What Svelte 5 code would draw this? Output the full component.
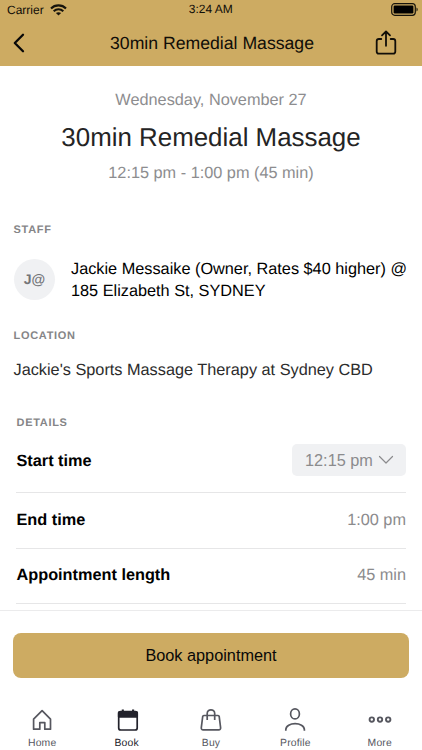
<script>
  const rows = [
    { label: 'Start time', value: '12:15 pm', select: true },
    { label: 'End time', value: '1:00 pm' },
    { label: 'Appointment length', value: '45 min' }
  ];
  const tabs = ['Home', 'Book', 'Buy', 'Profile', 'More'];
</script>

<div class="screen">
  <header>
    <div class="status">
      <div class="carrier">
        <span>Carrier</span>
        <svg width="17" height="12" viewBox="0 0 17 12" fill="none" stroke="#17140c" stroke-width="2.1">
          <path d="M1 4.4C5 .3 12 .3 16 4.4" />
          <path d="M3.7 7.2C6.4 4.6 10.6 4.6 13.3 7.2" />
          <path d="M8.5 11.6L5.9 9.1C7.3 7.8 9.7 7.8 11.1 9.1Z" fill="#17140c" stroke="none" />
        </svg>
      </div>
      <span class="clock">3:24 AM</span>
      <div class="battery">
        <svg width="28" height="13" viewBox="0 0 28 13">
          <rect x=".7" y=".7" width="23.6" height="11.6" rx="3" fill="none" stroke="#17140c" stroke-width="1.2" />
          <rect x="2.6" y="2.6" width="19.8" height="7.8" rx="1.2" fill="#000" />
          <path d="M25.5 4.5c1.6.6 1.6 3.4 0 4z" fill="#17140c" />
        </svg>
      </div>
    </div>
    <div class="bar">
      <svg width="12" height="20" viewBox="0 0 12 20" fill="none" stroke="#080808" stroke-width="2.3" stroke-linecap="round" stroke-linejoin="round"><path d="M10 1.8L1.8 10L10 18.2" /></svg>
      <h1>30min Remedial Massage</h1>
      <svg width="22" height="26" viewBox="0 0 22 26" fill="none" stroke="#110e08" stroke-width="1.8" stroke-linecap="round" stroke-linejoin="round">
        <path d="M6.3 9H3.9Q1.7 9 1.7 11.2V21.5Q1.7 23.7 3.9 23.7H18.1Q20.3 23.7 20.3 21.5V11.2Q20.3 9 18.1 9H15.7" />
        <path d="M11 15.8V1.8M7 5.3L11 1.5L15 5.3" />
      </svg>
    </div>
  </header>

  <main>
    <div class="summary">
      <p>Wednesday, November 27</p>
      <h2>30min Remedial Massage</h2>
      <p>12:15 pm - 1:00 pm (45 min)</p>
    </div>
    <h3>STAFF</h3>
    <div class="staff">
      <div class="avatar">J@</div>
      <div class="name">Jackie Messaike (Owner, Rates $40 higher) @<br />185 Elizabeth St, SYDNEY</div>
    </div>
    <h3>LOCATION</h3>
    <p class="location">Jackie's Sports Massage Therapy at Sydney CBD</p>
    <section>
      <h3>DETAILS</h3>
      {#each rows as row}
        <div class="row" class:first={row.select}>
          <strong>{row.label}</strong>
          {#if row.select}
            <button class="select">
              {row.value}
              <svg width="16" height="10" viewBox="0 0 16 10" fill="none" stroke="#8b8b8d" stroke-width="1.2" stroke-linecap="round" stroke-linejoin="round"><path d="M1.5 1.5L8 8L14.5 1.5" /></svg>
            </button>
          {:else}
            <span>{row.value}</span>
          {/if}
        </div>
      {/each}
    </section>
  </main>

  <div class="action"><button class="book">Book appointment</button></div>

  <nav>
    {#each tabs as tab}
      <div class="tab" class:active={tab === 'Book'}>
        <svg width="26" height="26" viewBox="0 0 26 26" fill="none" stroke="currentColor" stroke-width="1.7" stroke-linejoin="round">
          {#if tab === 'Home'}
            <path d="M4.6 12.2L13.1 3.7L21.5 12.2V22.2H15.8V15.6H10.8V22.2H4.6Z" />
          {:else if tab === 'Book'}
            <path d="M6.5 4.6H21.4Q23.2 4.6 23.2 6.4V21Q23.2 23 21.2 23H6.7Q4.7 23 4.7 21V6.4Q4.7 4.6 6.5 4.6Z" />
            <path d="M4.7 5.4H23.2V9.8H4.7Z" fill="currentColor" />
            <path d="M8.8 2.4V5M19.1 2.4V5" stroke-width="2.1" />
          {:else if tab === 'Buy'}
            <path d="M5.9 8.5H20Q21 8.5 21.2 9.5L22.6 20.6Q22.8 22.9 20.7 22.9H5.2Q3.1 22.9 3.3 20.6L4.7 9.5Q4.9 8.5 5.9 8.5Z" />
            <path d="M9.2 13V6.4C9.2 1.6 16.7 1.6 16.7 6.4V13" />
          {:else if tab === 'Profile'}
            <ellipse cx="13" cy="6.9" rx="4.4" ry="5" />
            <path d="M3.8 23.8V22.8C3.8 14.6 22.4 14.6 22.4 22.8V23.8" />
          {:else}
            <g stroke-width="1.9"><circle cx="4.8" cy="12.6" r="2.2" /><circle cx="13" cy="12.6" r="2.2" /><circle cx="21.2" cy="12.6" r="2.2" /></g>
          {/if}
        </svg>
        <span>{tab}</span>
      </div>
    {/each}
  </nav>
</div>

<style>
  :global(body) { margin: 0; background: #fff; }
  .screen {
    width: 422px; height: 750px; display: flex; flex-direction: column; overflow: hidden;
    background: #fff; color: #000; font-family: "Liberation Sans", Arial, sans-serif;
    font-size: 16.3px; text-rendering: geometricPrecision;
  }
  h1, h2, h3, p { margin: 0; font-weight: 400; }
  svg { display: block; flex: none; }
  button { border: 0; margin: 0; font: inherit; }
  header { height: 66px; flex: none; background: #cdab62; color: #110e08; }
  .status { height: 19px; padding: 0 3px 0 7px; display: grid; grid-template-columns: 1fr auto 1fr; align-items: center; font-size: 12px; }
  .carrier { display: flex; align-items: center; gap: 6.5px; }
  .clock { margin: -1px 4.5px 0 0; }
  .battery { display: flex; justify-content: flex-end; }
  .bar { height: 47px; padding: 0 25px 0 13px; display: grid; grid-template-columns: 36px 1fr 22px; align-items: center; }
  h1 { font-size: 17.65px; line-height: 24px; text-align: center; }
  main { height: 544px; flex: none; overflow: hidden; }
  .summary { padding-top: 24px; text-align: center; color: #8d8d8f; }
  .summary p { line-height: 20px; }
  h2 { font-size: 25.9px; line-height: 32px; margin: 12px 0 9px; color: #242424; }
  h3 { font-size: 11px; font-weight: 700; letter-spacing: .7px; line-height: 14px; color: #858587; padding-left: 13.5px; }
  .summary + h3 { margin-top: 40px; }
  .staff { display: flex; align-items: center; gap: 16px; margin: 20px 0 27px; padding-left: 14px; height: 45px; }
  .avatar { width: 41px; height: 41px; border-radius: 50%; background: #f0f1f3; color: #737478; font-size: 14px; font-weight: 700; line-height: 41px; text-align: center; flex: none; }
  .name { line-height: 22px; white-space: nowrap; }
  .location { padding-left: 13.5px; margin-top: 17px; line-height: 20px; color: #2c2c2c; white-space: nowrap; }
  section { padding: 0 16px; margin-top: 36px; }
  section h3 { padding-left: .5px; }
  .row { height: 54.5px; display: flex; align-items: center; justify-content: space-between; border-bottom: 1px solid #e6e6e7; color: #8b8b8d; }
  .row.first { height: 62px; }
  .row strong { color: #000; padding-left: .5px; }
  .row.first strong { padding-top: 1px; }
  .select { height: 32px; width: 114px; margin-bottom: 2px; padding: 0 12px 0 13px; border-radius: 5px; background: #f0f1f3; color: #8b8b8d; display: flex; align-items: center; justify-content: space-between; white-space: nowrap; }
  .action { height: 88px; flex: none; border-top: 1px solid #ebebec; padding: 22px 13px 0; box-sizing: border-box; }
  .book { display: block; width: 100%; height: 45px; padding: 0; border-radius: 8px; background: #cdab62; color: #080808; }
  nav { display: flex; flex: none; height: 52px; }
  .tab { width: 84.4px; padding-top: 9px; display: flex; flex-direction: column; align-items: center; color: #56575f; }
  .tab.active { color: #22222b; }
  .tab span { font-size: 10.4px; letter-spacing: .15px; line-height: 13px; margin-top: 4px; }
</style>
